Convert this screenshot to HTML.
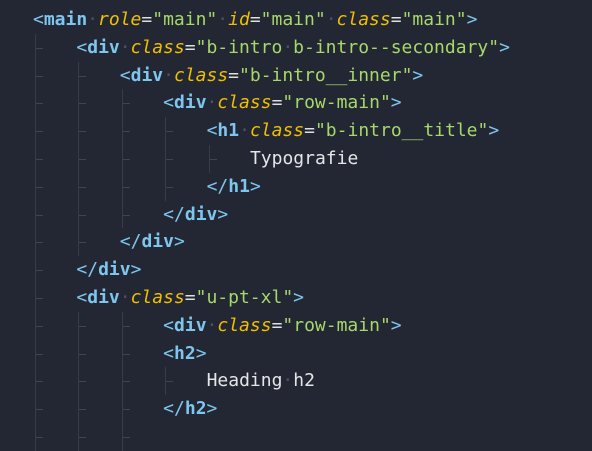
<!DOCTYPE html>
<html><head><meta charset="utf-8"><style>
body{margin:0;width:592px;height:430px;background:#222733;overflow:hidden;font-family:"DejaVu Sans Mono","Liberation Mono",monospace;font-size:18px;}
.l{position:absolute;left:33px;height:27.8px;line-height:27.8px;white-space:pre;color:#e6e6e6;}
.i{display:inline-block;width:43.4px;height:27.8px;vertical-align:top;position:relative;}
.i::before{content:"";position:absolute;left:2px;top:0;bottom:0;border-left:1px solid #363c4a;}
.i::after{content:"";position:absolute;left:3px;top:14px;width:7px;border-top:1px solid #3e4452;}
.p{color:#7fc6ef}.t{color:#7fc6ef;font-weight:bold}
.a{color:#f0c000;font-style:italic}.s{color:#a6d86a}.e{color:#e0e0e0}
.d{color:#4a5162}
</style></head><body>
<div class="l" style="top:6px"><span class="p">&lt;</span><span class="t">main</span><span class="d">·</span><span class="a">role</span><span class="e">=</span><span class="s">"main"</span><span class="d">·</span><span class="a">id</span><span class="e">=</span><span class="s">"main"</span><span class="d">·</span><span class="a">class</span><span class="e">=</span><span class="s">"main"</span><span class="p">&gt;</span></div>
<div class="l" style="top:33.8px"><span class="i"></span><span class="p">&lt;</span><span class="t">div</span><span class="d">·</span><span class="a">class</span><span class="e">=</span><span class="s">"b-intro<span class="d">·</span>b-intro--secondary"</span><span class="p">&gt;</span></div>
<div class="l" style="top:61.6px"><span class="i"></span><span class="i"></span><span class="p">&lt;</span><span class="t">div</span><span class="d">·</span><span class="a">class</span><span class="e">=</span><span class="s">"b-intro__inner"</span><span class="p">&gt;</span></div>
<div class="l" style="top:89.4px"><span class="i"></span><span class="i"></span><span class="i"></span><span class="p">&lt;</span><span class="t">div</span><span class="d">·</span><span class="a">class</span><span class="e">=</span><span class="s">"row-main"</span><span class="p">&gt;</span></div>
<div class="l" style="top:117.2px"><span class="i"></span><span class="i"></span><span class="i"></span><span class="i"></span><span class="p">&lt;</span><span class="t">h1</span><span class="d">·</span><span class="a">class</span><span class="e">=</span><span class="s">"b-intro__title"</span><span class="p">&gt;</span></div>
<div class="l" style="top:145px"><span class="i"></span><span class="i"></span><span class="i"></span><span class="i"></span><span class="i"></span>Typografie</div>
<div class="l" style="top:172.8px"><span class="i"></span><span class="i"></span><span class="i"></span><span class="i"></span><span class="p">&lt;/</span><span class="t">h1</span><span class="p">&gt;</span></div>
<div class="l" style="top:200.6px"><span class="i"></span><span class="i"></span><span class="i"></span><span class="p">&lt;/</span><span class="t">div</span><span class="p">&gt;</span></div>
<div class="l" style="top:228.4px"><span class="i"></span><span class="i"></span><span class="p">&lt;/</span><span class="t">div</span><span class="p">&gt;</span></div>
<div class="l" style="top:256.2px"><span class="i"></span><span class="p">&lt;/</span><span class="t">div</span><span class="p">&gt;</span></div>
<div class="l" style="top:284px"><span class="i"></span><span class="p">&lt;</span><span class="t">div</span><span class="d">·</span><span class="a">class</span><span class="e">=</span><span class="s">"u-pt-xl"</span><span class="p">&gt;</span></div>
<div class="l" style="top:311.8px"><span class="i"></span><span class="i"></span><span class="i"></span><span class="p">&lt;</span><span class="t">div</span><span class="d">·</span><span class="a">class</span><span class="e">=</span><span class="s">"row-main"</span><span class="p">&gt;</span></div>
<div class="l" style="top:339.6px"><span class="i"></span><span class="i"></span><span class="i"></span><span class="p">&lt;</span><span class="t">h2</span><span class="p">&gt;</span></div>
<div class="l" style="top:367.4px"><span class="i"></span><span class="i"></span><span class="i"></span><span class="i"></span>Heading<span class="d">·</span>h2</div>
<div class="l" style="top:395.2px"><span class="i"></span><span class="i"></span><span class="i"></span><span class="p">&lt;/</span><span class="t">h2</span><span class="p">&gt;</span></div>
<div class="l" style="top:423px"><span class="i"></span><span class="i"></span><span class="i"></span></div>
</body></html>
